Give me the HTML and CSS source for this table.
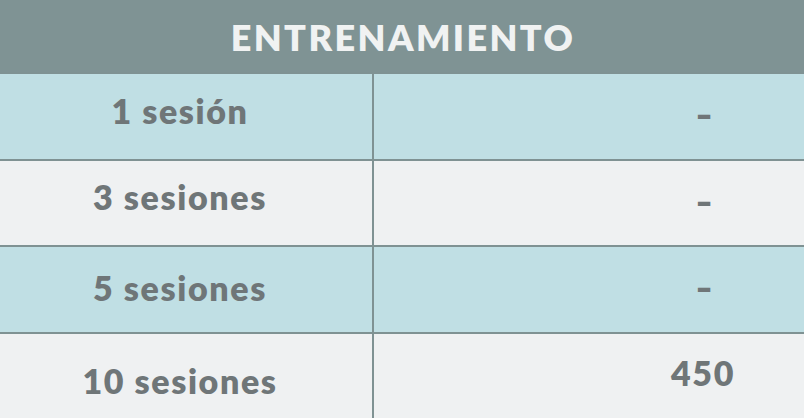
FILE: index.html
```html
<!DOCTYPE html>
<html lang="es">
<head>
<meta charset="utf-8">
<title>Entrenamiento</title>
<link rel="stylesheet" href="styles.css">
</head>
<body>
<div class="price-table">
  <div class="head">ENTRENAMIENTO</div>
  <div class="row blue r1">
    <div class="cell label">1 sesión</div>
    <div class="cell value"><span class="dash">-</span></div>
  </div>
  <div class="row grey r2">
    <div class="cell label">3 sesiones</div>
    <div class="cell value"><span class="dash">-</span></div>
  </div>
  <div class="row blue r3">
    <div class="cell label">5 sesiones</div>
    <div class="cell value"><span class="dash">-</span></div>
  </div>
  <div class="row grey r4">
    <div class="cell label">10 sesiones</div>
    <div class="cell value">450</div>
  </div>
</div>
</body>
</html>
```
FILE: styles.css
```css
html, body {
  margin: 0;
  padding: 0;
}
body {
  width: 804px;
  height: 418px;
  overflow: hidden;
  font-family: "Lato", "DejaVu Sans", sans-serif;
  font-weight: 800;
}
.price-table {
  display: flex;
  flex-direction: column;
  height: 418px;
}
.head {
  height: 72px;
  flex: none;
  background: #7f9394;
  color: #f0f2f2;
  display: flex;
  align-items: center;
  justify-content: center;
  font-size: 36px;
  letter-spacing: 2.4px;
  padding-top: 2px;
  padding-left: 2px;
  box-sizing: border-box;
}
.row {
  flex: 1;
  display: grid;
  grid-template-columns: 372px 1fr;
  border-top: 2px solid #7f9293;
}
.row.blue { background: #c0dfe4; }
.row.grey { background: #eff1f2; }
.cell {
  display: flex;
  align-items: center;
  justify-content: center;
  color: #6f7678;
  font-size: 34px;
  letter-spacing: 1.6px;
}
.label {
  padding-right: 12px;
}
.value {
  border-left: 2px solid #7f9293;
  padding-left: 232px;
  padding-bottom: 5px;
}
.dash {
  display: inline-block;
  transform: scaleX(1.35);
}
.r1 .label { padding-bottom: 11px; }
.r2 .label { padding-bottom: 13px; }
.r3 .label { padding-bottom: 4px; }
.r4 .label { padding-top: 10px; }
.r4 .value { padding-bottom: 7px; padding-left: 228px; }
```
